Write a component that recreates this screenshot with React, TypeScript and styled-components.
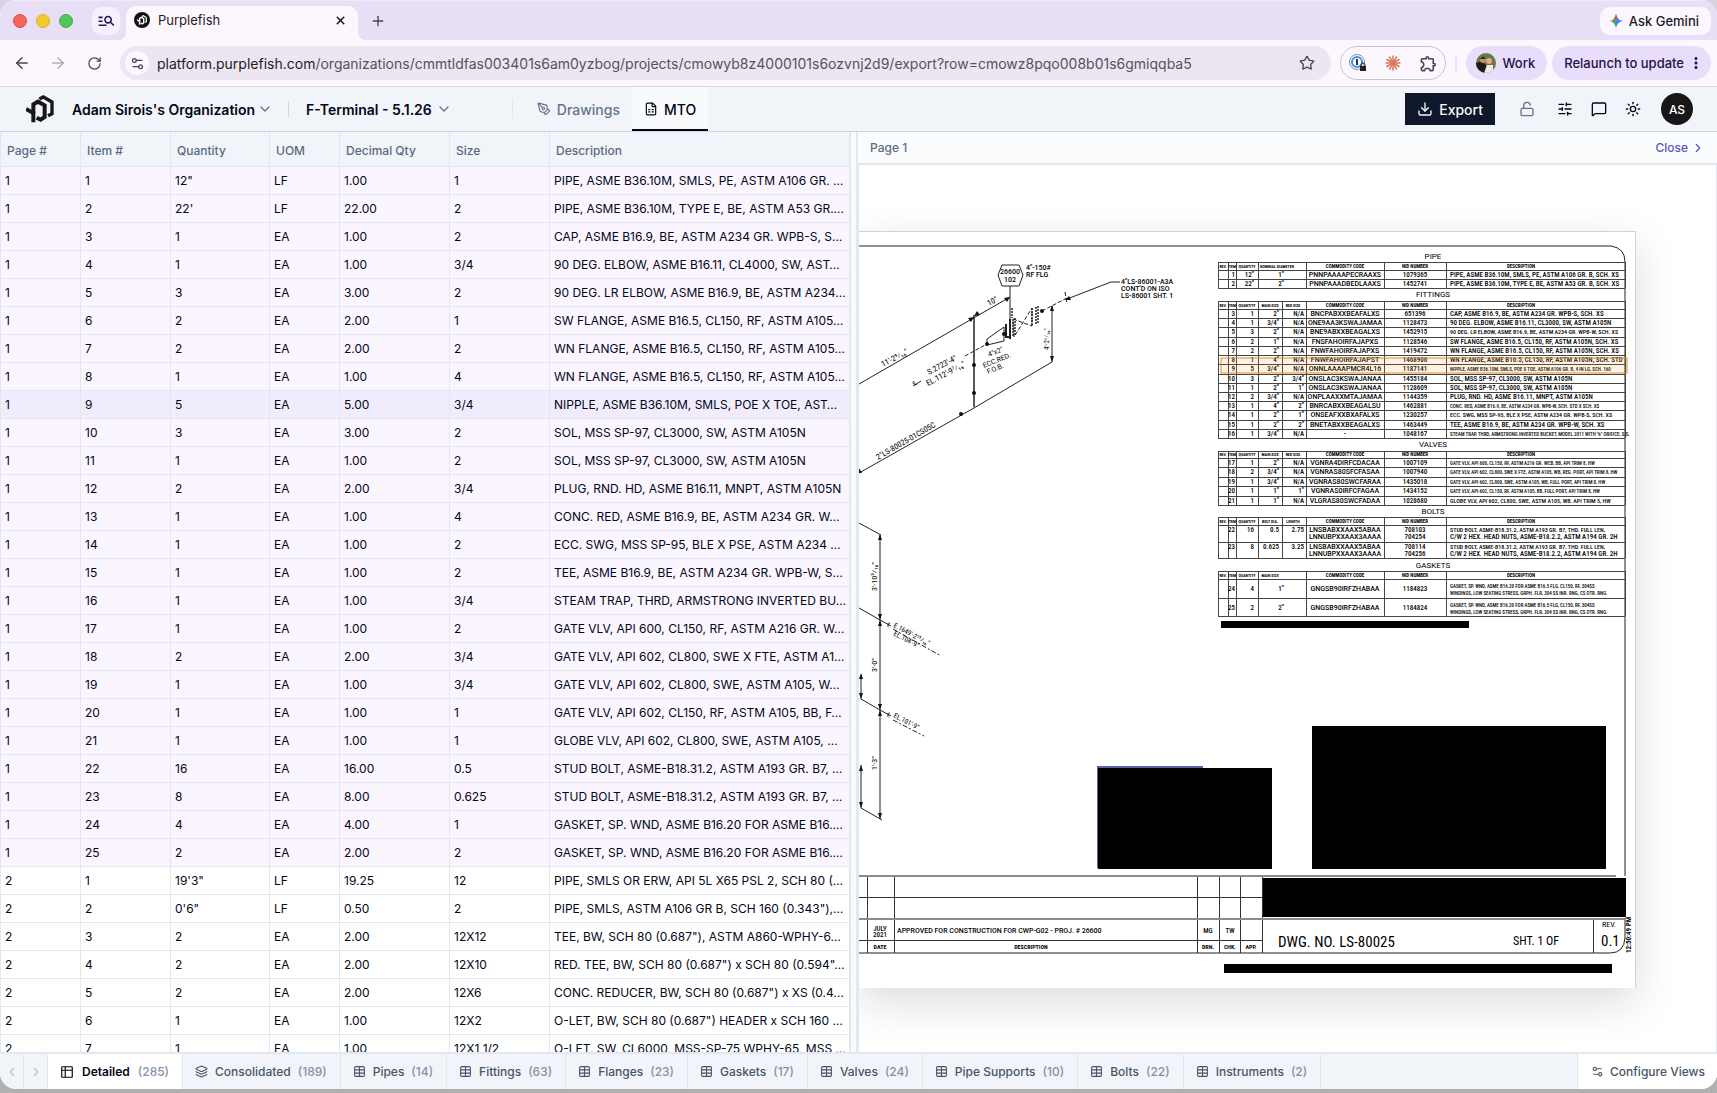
import React from 'react';
import styled, { createGlobalStyle } from 'styled-components';
import {
  ArrowLeft, ArrowRight, ChevronDown, ChevronLeft, ChevronRight, Download, FileSpreadsheet, Layers,
  LockOpen, MessageSquare, PenTool, Plus, RotateCw, Settings2, SlidersHorizontal, Star, Sun, Table, X,
} from 'lucide-react';
import { MdManageSearch, MdMoreVert, MdOutlineExtension } from 'react-icons/md';

const GlobalStyle = createGlobalStyle`
  *, *::before, *::after { box-sizing: border-box; }
  html, body, #root { height: 100%; margin: 0; }
  body { font-family: Inter, "Liberation Sans", sans-serif; color: #020617; background: #b0b0b0; overflow: hidden; }
  button { font: inherit; color: inherit; border: 0; padding: 0; background: none; cursor: pointer; }
`;

const Desktop = styled.div`
  height: 100vh;
  padding-bottom: 4px;
  background: linear-gradient(#d9d3e0 0, #d9d3e0 30%, #b0b0b0 70%);
`;
const Window = styled.div`
  display: flex;
  flex-direction: column;
  height: 100%;
  border-radius: 16px;
  overflow: hidden;
  background: #fff;
`;

/* Browser chrome */
const TabStrip = styled.div`
  display: flex;
  align-items: center;
  flex: none;
  height: 40px;
  padding: 0 6px 0 13px;
  background: #e8def6;
  border-top: 1px solid #efe8f8;
`;
const Lights = styled.div`
  display: flex;
  gap: 9px;
  margin-right: 19px;
`;
const Light = styled.span<{ $fill: string; $edge: string }>`
  width: 14px;
  height: 14px;
  border-radius: 50%;
  background: ${(p) => p.$fill};
  border: 1px solid ${(p) => p.$edge};
`;
const TabSearch = styled.button`
  display: grid;
  place-items: center;
  width: 28px;
  height: 28px;
  border-radius: 9px;
  background: #f6effe;
  color: #2b1550;
`;
const BrowserTab = styled.div`
  position: relative;
  display: flex;
  align-items: center;
  gap: 8px;
  align-self: flex-end;
  width: 232px;
  height: 34px;
  margin-left: 6px;
  padding: 0 10px 6px 8px;
  border-radius: 10px 10px 0 0;
  background: #fcf7ff;
  font-size: 13px;
  color: #1f1b24;
  &::before, &::after {
    content: '';
    position: absolute;
    bottom: 0;
    width: 8px;
    height: 8px;
  }
  &::before { left: -8px; background: radial-gradient(circle at 0 0, #e8def6 8px, #fcf7ff 8px); }
  &::after { right: -8px; background: radial-gradient(circle at 100% 0, #e8def6 8px, #fcf7ff 8px); }
`;
const TabTitle = styled.span` flex: 1; `;
const IconButton = styled.button<{ $size?: number; $color?: string }>`
  display: grid;
  place-items: center;
  width: ${(p) => p.$size ?? 16}px;
  height: ${(p) => p.$size ?? 16}px;
  color: ${(p) => p.$color ?? 'inherit'};
`;
const NewTab = styled(IconButton)` margin-left: 10px; `;
const Gemini = styled.button`
  display: flex;
  align-items: center;
  gap: 6px;
  height: 28px;
  margin-left: auto;
  padding: 0 12px 0 9px;
  border-radius: 10px;
  background: #fcf7ff;
  font-size: 13px;
  font-weight: 500;
  color: #1f1b24;
`;
const Toolbar = styled.div`
  display: flex;
  align-items: center;
  flex: none;
  height: 47px;
  padding: 0 6px 0 12px;
  background: #fcf7ff;
  border-bottom: 1px solid #dcd8e2;
  color: #4a4453;
`;
const NavButtons = styled.div`
  display: flex;
  gap: 16px;
  margin-right: 16px;
`;
const Omnibox = styled.div`
  display: flex;
  align-items: center;
  gap: 8px;
  flex: 1;
  min-width: 0;
  height: 34px;
  padding: 0 14px 0 5px;
  border-radius: 17px;
  background: #ece6f2;
`;
const SiteInfo = styled(IconButton)`
  border-radius: 50%;
  background: #fcf7ff;
`;
const Url = styled.span`
  flex: 1;
  overflow: hidden;
  white-space: nowrap;
  font-size: 14px;
  color: #57515e;
  b { font-weight: 400; color: #1f1b24; }
`;
const Extensions = styled.div`
  display: flex;
  align-items: center;
  justify-content: space-between;
  width: 106px;
  height: 34px;
  margin: 0 9px;
  padding: 0 7px;
  border: 1px solid #c9c3cf;
  border-radius: 17px;
`;
const ChromeRule = styled.span`
  width: 2px;
  height: 16px;
  margin-right: 9px;
  background: #e8dffd;
`;
const Pill = styled.button<{ $pad: string; $gap: number }>`
  display: flex;
  align-items: center;
  gap: ${(p) => p.$gap}px;
  height: 34px;
  margin-left: 5px;
  padding: ${(p) => p.$pad};
  border-radius: 17px;
  background: #e8defc;
  font-size: 13px;
  font-weight: 500;
  white-space: nowrap;
  color: #25104a;
  &:first-of-type { margin-left: 0; }
`;

/* Application header */
const AppHeader = styled.header`
  display: flex;
  align-items: center;
  flex: none;
  height: 45px;
  padding: 0 24px 0 26px;
  background: #f1f5f9;
  border-bottom: 1px solid #cbd5e1;
`;
const Crumb = styled.button<{ $gap: number }>`
  display: flex;
  align-items: center;
  gap: ${(p) => p.$gap}px;
  font-size: 14px;
  font-weight: 600;
  white-space: nowrap;
  svg { color: #64748b; }
`;
const Rule = styled.span<{ $h: number; $m: string; $c: string }>`
  width: 1px;
  height: ${(p) => p.$h}px;
  margin: ${(p) => p.$m};
  background: ${(p) => p.$c};
`;
const NavTab = styled.button<{ $active?: boolean }>`
  display: flex;
  align-items: center;
  gap: 6px;
  height: 44px;
  padding: 2px 12px 0;
  font-size: 14px;
  font-weight: 500;
  color: ${(p) => (p.$active ? '#020617' : '#64748b')};
  background: ${(p) => (p.$active ? '#f8fafc' : 'transparent')};
  border-bottom: 2px solid ${(p) => (p.$active ? '#020617' : 'transparent')};
`;
const ExportButton = styled.button`
  display: flex;
  align-items: center;
  gap: 6px;
  height: 32px;
  margin-left: auto;
  margin-right: 24px;
  padding: 0 12px;
  background: #0f172a;
  color: #f8fafc;
  font-size: 14px;
  font-weight: 500;
`;
const HeaderActions = styled.div`
  display: flex;
  align-items: center;
  gap: 18px;
`;
const LockButton = styled(IconButton)` margin-right: 4px; `;
const UserBadge = styled.button`
  width: 32px;
  height: 32px;
  margin-left: 2px;
  border-radius: 50%;
  background: #171717;
  color: #fff;
  font-size: 12px;
  font-weight: 500;
`;

/* Main split */
const Split = styled.main`
  display: grid;
  grid-template-columns: minmax(0, 851fr) 5px minmax(0, 861fr);
  flex: 1;
  min-height: 0;
`;
const TablePane = styled.section`
  overflow: hidden;
  border-right: 2px solid #e2e8f0;
`;
const Handle = styled.div` background: #f8fafc; `;
const Grid = styled.table`
  width: 100%;
  table-layout: fixed;
  border-collapse: separate;
  border-spacing: 0;
  font-size: 12px;
`;
const HeadCell = styled.th<{ $w?: number }>`
  width: ${(p) => (p.$w ? `${p.$w}px` : 'auto')};
  height: 35px;
  padding: 2px 6px 0;
  text-align: left;
  font-weight: 500;
  color: #5b6a80;
  background: #f1f5f9;
  border-left: 1px solid #e2e8f0;
  border-bottom: 1px solid #e2e8f0;
`;
const Row = styled.tr<{ $tone: string }>` background: ${(p) => p.$tone}; `;
const Cell = styled.td`
  height: 28px;
  padding: 0 4px;
  overflow: hidden;
  white-space: nowrap;
  border-left: 1px solid #e2e8f0;
  border-bottom: 1px solid #e2e8f0;
`;

const Viewer = styled.section`
  display: flex;
  flex-direction: column;
  min-width: 0;
  border-left: 2px solid #e2e8f0;
`;
const ViewerHead = styled.div`
  display: flex;
  align-items: center;
  justify-content: space-between;
  flex: none;
  height: 33px;
  padding: 0 12px;
  background: #fbfcfe;
  border-bottom: 2px solid #e2e8f0;
  font-size: 12px;
  font-weight: 500;
  color: #5b6a80;
`;
const CloseButton = styled.button`
  display: flex;
  align-items: center;
  gap: 3px;
  color: #5b54b8;
`;
const Stage = styled.div`
  display: flex;
  align-items: center;
  flex: 1;
  min-height: 0;
  padding-top: 2px;
  overflow: hidden;
  border-left: 1px solid #e2e8f0;
  border-right: 1px solid #e2e8f0;
`;
const Sheet = styled.div`
  flex: none;
  background: #fff;
  border-top: 1px solid #cbd5e1;
  border-right: 1px solid #cbd5e1;
  box-shadow: 0 14px 40px rgba(15, 23, 42, 0.15);
  svg { display: block; }
`;

/* Sheet tabs */
const BottomBar = styled.nav`
  display: flex;
  flex: none;
  height: 37px;
  border-top: 2px solid #e2e8f0;
  background: #f1f5f9;
  font-size: 12px;
  color: #475569;
`;
const Step = styled.button`
  display: grid;
  place-items: center;
  width: 24px;
  color: #b6c0cd;
  border-right: 1px solid #e2e8f0;
`;
const ViewTab = styled.button<{ $active?: boolean }>`
  display: flex;
  align-items: center;
  gap: ${(p) => (p.$active ? 8 : 7)}px;
  padding: 0 13px 0 12px;
  white-space: nowrap;
  border-right: 1px solid #e2e8f0;
  font-weight: ${(p) => (p.$active ? 600 : 500)};
  color: ${(p) => (p.$active ? '#020617' : '#475569')};
  background: ${(p) => (p.$active ? '#fff' : 'transparent')};
`;
const Count = styled.span`
  font-weight: 500;
  color: #8491a5;
`;
const Configure = styled.button`
  display: flex;
  align-items: center;
  gap: 6px;
  margin-left: auto;
  padding: 0 12px 0 13px;
  background: #fff;
  border-left: 1px solid #e2e8f0;
  font-weight: 500;
`;

const columns: [string, number?][] = [
  ['Page #', 80], ['Item #', 90], ['Quantity', 99], ['UOM', 70], ['Decimal Qty', 110], ['Size', 100], ['Description'],
];

const rows: string[][] = [
  ['1', '1', '12"', 'LF', '1.00', '1', 'PIPE, ASME B36.10M, SMLS, PE, ASTM A106 GR. …'],
  ['1', '2', "22'", 'LF', '22.00', '2', 'PIPE, ASME B36.10M, TYPE E, BE, ASTM A53 GR.…'],
  ['1', '3', '1', 'EA', '1.00', '2', 'CAP, ASME B16.9, BE, ASTM A234 GR. WPB-S, S…'],
  ['1', '4', '1', 'EA', '1.00', '3/4', '90 DEG. ELBOW, ASME B16.11, CL4000, SW, AST…'],
  ['1', '5', '3', 'EA', '3.00', '2', '90 DEG. LR ELBOW, ASME B16.9, BE, ASTM A234…'],
  ['1', '6', '2', 'EA', '2.00', '1', 'SW FLANGE, ASME B16.5, CL150, RF, ASTM A105…'],
  ['1', '7', '2', 'EA', '2.00', '2', 'WN FLANGE, ASME B16.5, CL150, RF, ASTM A105…'],
  ['1', '8', '1', 'EA', '1.00', '4', 'WN FLANGE, ASME B16.5, CL150, RF, ASTM A105…'],
  ['1', '9', '5', 'EA', '5.00', '3/4', 'NIPPLE, ASME B36.10M, SMLS, POE X TOE, AST…'],
  ['1', '10', '3', 'EA', '3.00', '2', 'SOL, MSS SP-97, CL3000, SW, ASTM A105N'],
  ['1', '11', '1', 'EA', '1.00', '2', 'SOL, MSS SP-97, CL3000, SW, ASTM A105N'],
  ['1', '12', '2', 'EA', '2.00', '3/4', 'PLUG, RND. HD, ASME B16.11, MNPT, ASTM A105N'],
  ['1', '13', '1', 'EA', '1.00', '4', 'CONC. RED, ASME B16.9, BE, ASTM A234 GR. W…'],
  ['1', '14', '1', 'EA', '1.00', '2', 'ECC. SWG, MSS SP-95, BLE X PSE, ASTM A234 …'],
  ['1', '15', '1', 'EA', '1.00', '2', 'TEE, ASME B16.9, BE, ASTM A234 GR. WPB-W, S…'],
  ['1', '16', '1', 'EA', '1.00', '3/4', 'STEAM TRAP, THRD, ARMSTRONG INVERTED BU…'],
  ['1', '17', '1', 'EA', '1.00', '2', 'GATE VLV, API 600, CL150, RF, ASTM A216 GR. W…'],
  ['1', '18', '2', 'EA', '2.00', '3/4', 'GATE VLV, API 602, CL800, SWE X FTE, ASTM A1…'],
  ['1', '19', '1', 'EA', '1.00', '3/4', 'GATE VLV, API 602, CL800, SWE, ASTM A105, W…'],
  ['1', '20', '1', 'EA', '1.00', '1', 'GATE VLV, API 602, CL150, RF, ASTM A105, BB, F…'],
  ['1', '21', '1', 'EA', '1.00', '1', 'GLOBE VLV, API 602, CL800, SWE, ASTM A105, …'],
  ['1', '22', '16', 'EA', '16.00', '0.5', 'STUD BOLT, ASME-B18.31.2, ASTM A193 GR. B7, …'],
  ['1', '23', '8', 'EA', '8.00', '0.625', 'STUD BOLT, ASME-B18.31.2, ASTM A193 GR. B7, …'],
  ['1', '24', '4', 'EA', '4.00', '1', 'GASKET, SP. WND, ASME B16.20 FOR ASME B16.…'],
  ['1', '25', '2', 'EA', '2.00', '2', 'GASKET, SP. WND, ASME B16.20 FOR ASME B16.…'],
  ['2', '1', '19\'3"', 'LF', '19.25', '12', 'PIPE, SMLS OR ERW, API 5L X65 PSL 2, SCH 80 (…'],
  ['2', '2', '0\'6"', 'LF', '0.50', '2', 'PIPE, SMLS, ASTM A106 GR B, SCH 160 (0.343"),…'],
  ['2', '3', '2', 'EA', '2.00', '12X12', 'TEE, BW, SCH 80 (0.687"), ASTM A860-WPHY-6…'],
  ['2', '4', '2', 'EA', '2.00', '12X10', 'RED. TEE, BW, SCH 80 (0.687") x SCH 80 (0.594"…'],
  ['2', '5', '2', 'EA', '2.00', '12X6', 'CONC. REDUCER, BW, SCH 80 (0.687") x XS (0.4…'],
  ['2', '6', '1', 'EA', '1.00', '12X2', 'O-LET, BW, SCH 80 (0.687") HEADER x SCH 160 …'],
  ['2', '7', '1', 'EA', '1.00', '12X1 1/2', 'O-LET, SW, CL6000, MSS-SP-75 WPHY-65, MSS …'],
];

const views: [string, number][] = [
  ['Pipes', 14], ['Fittings', 63], ['Flanges', 23], ['Gaskets', 17], ['Valves', 24], ['Pipe Supports', 10], ['Bolts', 22], ['Instruments', 2],
];

/* Isometric drawing */
type BomRow = { c: string[]; code: string[]; nid: string[]; d: string[] };
const r = (c: string, code: string, nid: string, d: string): BomRow => ({
  c: c.split('|'), code: code.split('|'), nid: nid.split('|'), d: d.split('|'),
});

const BOM: { title: string; ty: number; top: number; head: number; sizes: string[]; rows: BomRow[]; bottom: number }[] = [
  { title: 'PIPE', ty: 259, top: 262, head: 270, bottom: 288, sizes: ['NOMINAL DIAMETER'], rows: [
    r('1|12"|1"', 'PNNPAAAAPECRAAXS', '1079365', 'PIPE, ASME B36.10M, SMLS, PE, ASTM A106 GR. B, SCH. XS'),
    r('2|22"|2"', 'PNNPAAADBEDLAAXS', '1452741', 'PIPE, ASME B36.10M, TYPE E, BE, ASTM A53 GR. B, SCH. XS'),
  ] },
  { title: 'FITTINGS', ty: 297, top: 301, head: 309, bottom: 438, sizes: ['MAIN SIZE', 'RED SIZE'], rows: [
    r('3|1|2"|N/A', 'BNCPABXXBEAFALXS', '651396', 'CAP, ASME B16.9, BE, ASTM A234 GR. WPB-S, SCH. XS'),
    r('4|1|3/4"|N/A', 'ONE9AA3KSWAJAMAA', '1128473', '90 DEG. ELBOW, ASME B16.11, CL3000, SW, ASTM A105N'),
    r('5|3|2"|N/A', 'BNE9ABXXBEAGALXS', '1452915', '90 DEG. LR ELBOW, ASME B16.9, BE, ASTM A234 GR. WPB-W, SCH. XS'),
    r('6|2|1"|N/A', 'FNSFAHOIRFAJAPXS', '1128546', 'SW FLANGE, ASME B16.5, CL150, RF, ASTM A105N, SCH. XS'),
    r('7|2|2"|N/A', 'FNWFAHOIRFAJAPXS', '1419472', 'WN FLANGE, ASME B16.5, CL150, RF, ASTM A105N, SCH. XS'),
    r('8|1|4"|N/A', 'FNWFAHOIRFAJAPST', '1468906', 'WN FLANGE, ASME B16.5, CL150, RF, ASTM A105N, SCH. STD'),
    r('9|5|3/4"|N/A', 'ONNLAAAAPMCR4L16', '1187141', 'NIPPLE, ASME B36.10M, SMLS, POE X TOE, ASTM A106 GR. B, 4 IN LG, SCH. 160'),
    r('10|3|2"|3/4"', 'ONSLAC3KSWAJANAA', '1455184', 'SOL, MSS SP-97, CL3000, SW, ASTM A105N'),
    r('11|1|2"|1"', 'ONSLAC3KSWAJANAA', '1128609', 'SOL, MSS SP-97, CL3000, SW, ASTM A105N'),
    r('12|2|3/4"|N/A', 'ONPLAAXXMTAJAMAA', '1144359', 'PLUG, RND. HD, ASME B16.11, MNPT, ASTM A105N'),
    r('13|1|4"|2"', 'BNRCABXXBEAGALSU', '1462881', 'CONC. RED, ASME B16.9, BE, ASTM A234 GR. WPB-W, SCH. STD X SCH. XS'),
    r('14|1|2"|1"', 'ONSEAFXXBXAFALXS', '1230257', 'ECC. SWG, MSS SP-95, BLE X PSE, ASTM A234 GR. WPB-S, SCH. XS'),
    r('15|1|2"|2"', 'BNETABXXBEAGALXS', '1463449', 'TEE, ASME B16.9, BE, ASTM A234 GR. WPB-W, SCH. XS'),
    r('16|1|3/4"|N/A', '-', '1048167', 'STEAM TRAP, THRD, ARMSTRONG INVERTED BUCKET, MODEL 2011 WITH ⅝" ORIFICE, S.S.'),
  ] },
  { title: 'VALVES', ty: 447, top: 451, head: 458, bottom: 505, sizes: ['MAIN SIZE', 'RED SIZE'], rows: [
    r('17|1|2"|N/A', 'VGNRA4DIRFCDACAA', '1007109', 'GATE VLV, API 600, CL150, RF, ASTM A216 GR. WCB, BB, API TRIM 8, HW'),
    r('18|2|3/4"|N/A', 'VGNRAS80SFCFASAA', '1007940', 'GATE VLV, API 602, CL800, SWE X FTE, ASTM A105, WB, REG. PORT, API TRIM 8, HW'),
    r('19|1|3/4"|N/A', 'VGNRAS80SWCFARAA', '1435018', 'GATE VLV, API 602, CL800, SWE, ASTM A105, WB, FULL PORT, API TRIM 8, HW'),
    r('20|1|1"|1"', 'VGNRAS0IRFCFAGAA', '1434152', 'GATE VLV, API 602, CL150, RF, ASTM A105, BB, FULL PORT, API TRIM 8, HW'),
    r('21|1|1"|N/A', 'VLGRAS80SWCFADAA', '1028680', 'GLOBE VLV, API 602, CL800, SWE, ASTM A105, WB, API TRIM 5, HW'),
  ] },
  { title: 'BOLTS', ty: 514, top: 517, head: 525, bottom: 558, sizes: ['BOLT DIA.', 'LENGTH'], rows: [
    r('22|16|0.5|2.75', 'LNSBABXXAAX5ABAA|LNNUBPXXAAX3AAAA', '708103|704254', 'STUD BOLT, ASME-B18.31.2, ASTM A193 GR. B7, THD. FULL LEN,|C/W 2 HEX. HEAD NUTS, ASME-B18.2.2, ASTM A194 GR. 2H'),
    r('23|8|0.625|3.25', 'LNSBABXXAAX5ABAA|LNNUBPXXAAX3AAAA', '708114|704256', 'STUD BOLT, ASME-B18.31.2, ASTM A193 GR. B7, THD. FULL LEN,|C/W 2 HEX. HEAD NUTS, ASME-B18.2.2, ASTM A194 GR. 2H'),
  ] },
  { title: 'GASKETS', ty: 568, top: 571, head: 579, bottom: 616, sizes: ['MAIN SIZE'], rows: [
    r('24|4|1"', 'GNGSB90IRFZHABAA', '1184823', 'GASKET, SP. WND, ASME B16.20 FOR ASME B16.5 FLG, CL150, RF, 304SS|WINDINGS, LOW SEATING STRESS, GRPH. FLR, 304 SS INR. RNG, CS OTR. RNG.'),
    r('25|2|2"', 'GNGSB90IRFZHABAA', '1184824', 'GASKET, SP. WND, ASME B16.20 FOR ASME B16.5 FLG, CL150, RF, 304SS|WINDINGS, LOW SEATING STRESS, GRPH. FLR, 304 SS INR. RNG, CS OTR. RNG.'),
  ] },
];

/* Long descriptions are set smaller so that they stay inside their column */
const descSize = (text: string) => (text.length < 58 ? 7 : text.length < 64 ? 6 : 5);

const CONDENSED = '"Roboto Condensed", Roboto, "Liberation Sans", sans-serif';
const REGULAR = 'Roboto, "Liberation Sans", sans-serif';
const Ink = styled.g<{ $bold?: boolean }>`
  font-family: ${CONDENSED};
  fill: #000;
  stroke: none;
  font-weight: ${(p) => (p.$bold ? 700 : 500)};
`;
const T = styled.text<{ $s?: number; $light?: boolean; $wide?: boolean }>`
  font-size: ${(p) => p.$s ?? 7}px;
  font-weight: ${(p) => (p.$light ? 400 : 'inherit')};
  font-family: ${(p) => (p.$wide ? REGULAR : 'inherit')};
`;

function BillOfMaterials() {
  return (
    <g>
      {BOM.map((s) => {
        const two = s.sizes.length === 2;
        const n = s.rows.length;
        const edge = (i: number) => Math.round(s.head + ((s.bottom - s.head) * i) / n);
        const cols = [1218, 1228, 1236, 1258, ...(two ? [1282] : []), 1306, 1384, 1446, 1625];
        const headings: [number, string, number][] = [
          [1223, 'REV.', 4], [1232, 'ITEM', 4], [1247, 'QUANTITY', 4],
          ...s.sizes.map((z, i): [number, string, number] => [i ? 1293 : s.title === 'PIPE' ? 1277 : 1270, z, 4]),
          [1345, 'COMMODITY CODE', 5], [1415, 'NID NUMBER', 5], [1521, 'DESCRIPTION', 5],
        ];
        return (
          <g key={s.title}>
            <g stroke="#444" strokeWidth="1" shapeRendering="crispEdges">
              <line x1="1218" x2="1625" y1={s.top} y2={s.top} />
              {Array.from({ length: n + 1 }, (_, i) => (
                <line key={i} x1="1218" x2="1625" y1={edge(i)} y2={edge(i)} />
              ))}
              {cols.map((x) => <line key={x} x1={x} x2={x} y1={s.top} y2={s.bottom} />)}
            </g>
            <Ink>
              <T x="1433" y={s.ty} textAnchor="middle" $s={8} $light $wide>{s.title}</T>
            </Ink>
            <Ink $bold>
              {headings.map(([x, label, size]) => (
                <T key={label} x={x} y={s.head - 2} textAnchor="middle" $s={size}>{label}</T>
              ))}
            </Ink>
            <Ink>
              {s.rows.map((row, i) => {
                const gasket = s.title === 'GASKETS';
                const base = edge(i) + (gasket ? 12 : 7);
                return (
                  <g key={row.c[0]}>
                    <T x="1235" y={base} textAnchor="end">{row.c[0]}</T>
                    <T x="1254" y={base} textAnchor="end">{row.c[1]}</T>
                    <T x={two ? 1279 : 1284} y={base} textAnchor="end">{row.c[2]}</T>
                    {two && <T x="1304" y={base} textAnchor="end">{row.c[3]}</T>}
                    {row.code.map((t, k) => <T key={k} x="1345" y={base + k * 7} textAnchor="middle" $wide>{t}</T>)}
                    {row.nid.map((t, k) => <T key={k} x="1415" y={base + k * 7} textAnchor="middle">{t}</T>)}
                    {row.d.map((t, k) => (
                      <T key={k} x="1450" y={base + k * 7 - (gasket ? 3 : 0)} $s={descSize(t)}>{t}</T>
                    ))}
                  </g>
                );
              })}
            </Ink>
          </g>
        );
      })}
    </g>
  );
}

function IsoDrawing() {
  return (
    <svg width="776" height="756" viewBox="859 232 776 756" role="img" aria-label="Isometric drawing, page 1">
      <g fill="none" stroke="#222" strokeWidth="1">
        {/* frame */}
        <path d="M859 246H1611Q1625 248 1625 262V876M1625 918V938Q1624 953 1610 953H859" />
        {/* upper run */}
        <path d="M859 384L1010 297M1010 286V319" />
        <path d="M1010 319V339M1006 324V337H1010" strokeWidth="2" />
        <path d="M998 275L1002 265H1019L1023 275L1019 286H1002Z" />
        <path d="M974 315V407" strokeWidth="1.5" />
        <path d="M1052 306V362L974 408L859 473" />
        <path d="M1120 282H1111L1067 299" />
        <path d="M987 344V339L1004 327V341L987 345Z" />
        <path d="M965 356L987 344M1042 311L1067 298M1065 292L1067 304M1013 319L1032 326V308L1014 337Z" strokeDasharray="4 2" />
        <path d="M1012 308V318M1013 319V337M1015 318V336M1032 308V326M1036 307V325M1038 306V324" strokeWidth="1.5" strokeDasharray="2 1" />
        <path d="M913 386L921 381" />
        {/* lower run */}
        <path d="M859 523L881 535M880 535V819M859 608L880 620L891 626M861 699L880 710L891 716M861 675V699M861 765V808L882 820" />
        <path d="M893 629L941 656M893 720L924 736" strokeDasharray="5 2 2 2" />
      </g>
      <g fill="#111">
        <circle cx="974" cy="365" r="2" /><circle cx="974" cy="393" r="2" /><circle cx="961" cy="414" r="2" />
        <circle cx="987" cy="344" r="2" /><circle cx="1004" cy="334" r="2" /><circle cx="1042" cy="311" r="2" />
        <path d="M1010 297l-6 1l3 4zM974 316l6 -1l-3 -4zM974 317l-6 1l3 4zM1052 305l-2 6h4zM1052 362l-2 -6h4zM1065 300l6 0l-2 -4zM859 473l0 -5l3 5z" />
        <path d="M880 534l-2 6h4zM880 620l-2 -6h4zM880 620l-2 6h4zM880 710l-2 -6h4zM880 710l-2 6h4zM880 819l-2 -6h4zM861 673l-2 6h4zM861 699l-2 -6h4zM861 765l-2 6h4zM861 808l-2 -6h4z" />
      </g>
      <Ink>
        <T x="1010" y="274" textAnchor="middle" $wide>26600</T>
        <T x="1010" y="282" textAnchor="middle" $wide>102</T>
        <T x="1026" y="270" $wide>4"-150#</T>
        <T x="1026" y="277" $wide>RF FLG</T>
        <T x="1121" y="284" $wide>4"LS-86001-A3A</T>
        <T x="1121" y="291" $wide>CONT'D ON ISO</T>
        <T x="1121" y="298" $wide>LS-86001 SHT. 1</T>
        <T $s={8} $light transform="translate(989 306) rotate(-28)">10"</T>
        <T $s={8} $light transform="translate(883 367) rotate(-28)">11'-2⁹⁄₁₆"</T>
        <T $s={8} $light transform="translate(929 375) rotate(-28)">S.2723'-4"</T>
        <T $s={8} $light transform="translate(928 386) rotate(-28)">EL.112'-9⁷⁄₁₆"</T>
        <T transform="translate(914 386) rotate(-28)">℄</T>
        <T $light $wide transform="translate(989 357) rotate(-22)">4"x2"</T>
        <T $light $wide transform="translate(984 368) rotate(-22)">ECC.RED.</T>
        <T $light $wide transform="translate(988 374) rotate(-22)">F.O.B.</T>
        <T $light transform="translate(1049 350) rotate(-90)">4'-2¹⁄₁₆"</T>
        <T $s={8} $light transform="translate(878 460) rotate(-30)">2"LS-80025-01CS05C</T>
        <T $s={8} $light transform="translate(877 591) rotate(-90)">3'-10³⁄₁₆"</T>
        <T $s={8} $light transform="translate(877 672) rotate(-90)">3'-0"</T>
        <T $s={8} $light transform="translate(877 770) rotate(-90)">1'-3"</T>
        <T transform="translate(886 626) rotate(28)">℄</T>
        <T $light transform="translate(893 627) rotate(28)">E.1649'-2¹⁵⁄₁₆"</T>
        <T $light transform="translate(893 635) rotate(28)">EL.104'-9"</T>
        <T transform="translate(886 716) rotate(28)">℄</T>
        <T $light transform="translate(893 717) rotate(28)">EL.101'-9"</T>
      </Ink>

      <BillOfMaterials />
      <rect x="1221" y="358" width="406" height="15" fill="rgba(249,146,40,.12)" stroke="#dd8a2e" />

      {/* redactions */}
      <rect x="1221" y="621" width="248" height="7" />
      <path d="M1098 868V767H1203" fill="none" stroke="#5a5fb0" strokeWidth="2" />
      <rect x="1098" y="768" width="174" height="101" />
      <rect x="1312" y="726" width="294" height="143" />
      <rect x="1224" y="964" width="388" height="9" />

      {/* title block */}
      <g stroke="#333" strokeWidth="1" shapeRendering="crispEdges">
        <path d="M859 897H1262M859 940H1262M867 876V953M894 876V953M1197 876V953M1219 876V953M1240 876V953M1262 876V953M1593 919V953" fill="none" />
        <path d="M859 876H1616M859 919H1625" fill="none" stroke="#8a8a8a" strokeWidth="2" />
      </g>
      <rect x="1263" y="878" width="363" height="39" />
      <Ink>
        <T x="880" y="931" textAnchor="middle">JULY</T>
        <T x="880" y="937" textAnchor="middle">2021</T>
        <T x="897" y="933" $wide>APPROVED FOR CONSTRUCTION FOR CWP-G02 - PROJ. # 26600</T>
        <T x="1208" y="933" textAnchor="middle">MG</T>
        <T x="1230" y="933" textAnchor="middle">TW</T>
        <T x="1278" y="947" $s={15} $light>DWG. NO. LS-80025</T>
        <T x="1513" y="945" $s={12} $light>SHT. 1 OF</T>
        <T x="1602" y="927" $s={8} $light>REV.</T>
        <T x="1601" y="946" $s={15} $light>0.1</T>
      </Ink>
      <Ink $bold>
        <T x="880" y="949" textAnchor="middle" $s={6}>DATE</T>
        <T x="1031" y="949" textAnchor="middle" $s={6}>DESCRIPTION</T>
        <T x="1208" y="949" textAnchor="middle" $s={6}>DRN.</T>
        <T x="1230" y="949" textAnchor="middle" $s={6}>CHK.</T>
        <T x="1251" y="949" textAnchor="middle" $s={6}>APP.</T>
        <T $s={7} transform="translate(1631 953) rotate(-90)">12:50:49 PM</T>
      </Ink>
    </svg>
  );
}

const LogoMark = ({ size, color }: { size: number; color: string }) => (
  <svg width={size} height={size} viewBox="0 0 84 84" fill="none" stroke={color} strokeWidth="12" aria-hidden="true">
    <path d="M40 12L52 6L78 21V56L66 62" strokeWidth="10" />
    <path d="M22 82V28L36 20L56 31V66L44 74L32 68" />
    <path d="M0 42L26 56" />
  </svg>
);

const GeminiMark = () => (
  <svg width="14" height="14" viewBox="0 0 14 14" aria-hidden="true">
    <defs>
      <linearGradient id="gem" x1="0" y1="0" x2="1" y2="0">
        <stop offset="0" stopColor="#f5c211" /><stop offset=".35" stopColor="#3fae6a" /><stop offset=".6" stopColor="#4285f4" /><stop offset="1" stopColor="#3b7bf0" />
      </linearGradient>
    </defs>
    <path d="M7 0Q8 6 14 7Q8 8 7 14Q6 8 0 7Q6 6 7 0Z" fill="url(#gem)" />
    <path d="M7 0Q8 4 9 5L5 5Q6 4 7 0Z" fill="#ea4335" />
  </svg>
);

const PasswordMark = () => (
  <svg width="18" height="18" viewBox="0 0 18 18" aria-hidden="true">
    <circle cx="8" cy="8" r="7.5" fill="#fff" stroke="#8b9096" />
    <circle cx="8" cy="8" r="5" fill="none" stroke="#3f8df5" strokeWidth="2" />
    <rect x="7" y="5" width="2" height="6" fill="#2b3440" />
    <path d="M11 12h6v5h-6z" fill="#222" />
    <path d="M12 12V11a2 2 0 0 1 4 0V12" fill="none" stroke="#222" />
  </svg>
);

const Burst = () => (
  <svg width="18" height="18" viewBox="-9 -9 18 18" stroke="#d9775a" strokeWidth="1.5" strokeLinecap="round" aria-hidden="true">
    {Array.from({ length: 12 }, (_, i) => <line key={i} x1="0" y1="-1" x2="0" y2="-7" transform={`rotate(${i * 30})`} />)}
  </svg>
);

const Portrait = () => (
  <svg width="20" height="20" viewBox="0 0 20 20" aria-hidden="true">
    <clipPath id="face"><circle cx="10" cy="10" r="10" /></clipPath>
    <g clipPath="url(#face)">
      <rect width="20" height="20" fill="#5f7d45" />
      <path d="M0 20V10L6 8L10 12V20Z" fill="#1d1a1c" />
      <circle cx="7" cy="7" r="3" fill="#c98f6f" /><path d="M4 6Q7 1 10 6Z" fill="#3a2719" />
      <path d="M10 18V8Q13 2 17 8V16Z" fill="#8a5f3a" />
      <circle cx="13" cy="8" r="3" fill="#e0a98b" />
      <path d="M8 20L11 12H17V20Z" fill="#f0e8e4" />
    </g>
  </svg>
);

const DetailIcon = () => (
  <svg width="14" height="14" viewBox="0 0 24 24" fill="none" stroke="currentColor" strokeWidth="2" aria-hidden="true">
    <rect x="3" y="3" width="18" height="18" rx="1" /><path d="M3 9H21M9 3V21" />
  </svg>
);

const Favicon = styled.span`
  display: grid;
  place-items: center;
  width: 16px;
  height: 16px;
  border-radius: 50%;
  background: #111;
`;
const LogoLink = styled.a`
  display: flex;
  margin-right: 18px;
`;

export default function App() {
  return (
    <Desktop>
      <GlobalStyle />
      <Window>
        <TabStrip>
          <Lights>
            <Light $fill="#f2645c" $edge="#e2483f" />
            <Light $fill="#f5c731" $edge="#e3b11f" />
            <Light $fill="#56c45b" $edge="#3fae48" />
          </Lights>
          <TabSearch aria-label="Search tabs"><MdManageSearch size={19} /></TabSearch>
          <BrowserTab>
            <Favicon><LogoMark size={10} color="#fff" /></Favicon>
            <TabTitle>Purplefish</TabTitle>
            <IconButton aria-label="Close tab"><X size={13} strokeWidth={3} /></IconButton>
          </BrowserTab>
          <NewTab aria-label="New tab" $size={20} $color="#4a4453"><Plus size={16} /></NewTab>
          <Gemini><GeminiMark />Ask Gemini</Gemini>
        </TabStrip>

        <Toolbar>
          <NavButtons>
            <IconButton $size={20} aria-label="Back"><ArrowLeft size={18} /></IconButton>
            <IconButton $size={20} $color="#b3adba" aria-label="Forward"><ArrowRight size={18} /></IconButton>
            <IconButton $size={20} aria-label="Reload"><RotateCw size={15} /></IconButton>
          </NavButtons>
          <Omnibox>
            <SiteInfo $size={24} aria-label="Site information"><Settings2 size={15} /></SiteInfo>
            <Url><b>platform.purplefish.com</b>/organizations/cmmtldfas003401s6am0yzbog/projects/cmowyb8z4000101s6ozvnj2d9/export?row=cmowz8pqo008b01s6gmiqqba5</Url>
            <IconButton $size={20} aria-label="Bookmark"><Star size={16} /></IconButton>
          </Omnibox>
          <Extensions>
            <IconButton $size={20} aria-label="1Password"><PasswordMark /></IconButton>
            <IconButton $size={20} aria-label="Claude"><Burst /></IconButton>
            <IconButton $size={20} aria-label="Extensions"><MdOutlineExtension size={19} /></IconButton>
          </Extensions>
          <ChromeRule />
          <Pill $pad="0 12px 0 10px" $gap={6}><Portrait />Work</Pill>
          <Pill $pad="0 6px 0 12px" $gap={3}>Relaunch to update<MdMoreVert size={18} /></Pill>
        </Toolbar>

        <AppHeader>
          <LogoLink href="#" aria-label="Home"><LogoMark size={28} color="#171717" /></LogoLink>
          <Crumb $gap={2}>Adam Sirois's Organization<ChevronDown size={16} /></Crumb>
          <Rule $h={16} $m="0 17px 0 15px" $c="#cbd5e1" />
          <Crumb $gap={4}>F-Terminal - 5.1.26<ChevronDown size={16} /></Crumb>
          <Rule $h={20} $m="0 12px 0 60px" $c="#e2e8f0" />
          <NavTab><PenTool size={14} />Drawings</NavTab>
          <NavTab $active><FileSpreadsheet size={14} />MTO</NavTab>
          <ExportButton><Download size={16} />Export</ExportButton>
          <HeaderActions>
            <LockButton $size={16} $color="#64748b" aria-label="Unlock"><LockOpen size={16} /></LockButton>
            <IconButton $size={16} aria-label="Filters"><SlidersHorizontal size={16} /></IconButton>
            <IconButton $size={16} aria-label="Comments"><MessageSquare size={16} /></IconButton>
            <IconButton $size={16} aria-label="Theme"><Sun size={16} /></IconButton>
            <UserBadge>AS</UserBadge>
          </HeaderActions>
        </AppHeader>

        <Split>
          <TablePane>
            <Grid>
              <thead>
                <tr>{columns.map(([name, w]) => <HeadCell key={name} $w={w} scope="col">{name}</HeadCell>)}</tr>
              </thead>
              <tbody>
                {rows.map((row, i) => (
                  <Row key={i} $tone={i === 8 ? '#f1ecfb' : row[0] === '1' ? '#faf5ff' : '#fff'}>
                    {row.map((v, k) => <Cell key={k}>{v}</Cell>)}
                  </Row>
                ))}
              </tbody>
            </Grid>
          </TablePane>
          <Handle />
          <Viewer>
            <ViewerHead>
              Page 1
              <CloseButton>Close<ChevronRight size={14} /></CloseButton>
            </ViewerHead>
            <Stage>
              <Sheet><IsoDrawing /></Sheet>
            </Stage>
          </Viewer>
        </Split>

        <BottomBar>
          <Step aria-label="Previous"><ChevronLeft size={14} /></Step>
          <Step aria-label="Next"><ChevronRight size={14} /></Step>
          <ViewTab $active><DetailIcon />Detailed <Count>(285)</Count></ViewTab>
          <ViewTab><Layers size={13} />Consolidated <Count>(189)</Count></ViewTab>
          {views.map(([name, n]) => (
            <ViewTab key={name}><Table size={13} />{name} <Count>({n})</Count></ViewTab>
          ))}
          <Configure><Settings2 size={13} />Configure Views</Configure>
        </BottomBar>
      </Window>
    </Desktop>
  );
}
